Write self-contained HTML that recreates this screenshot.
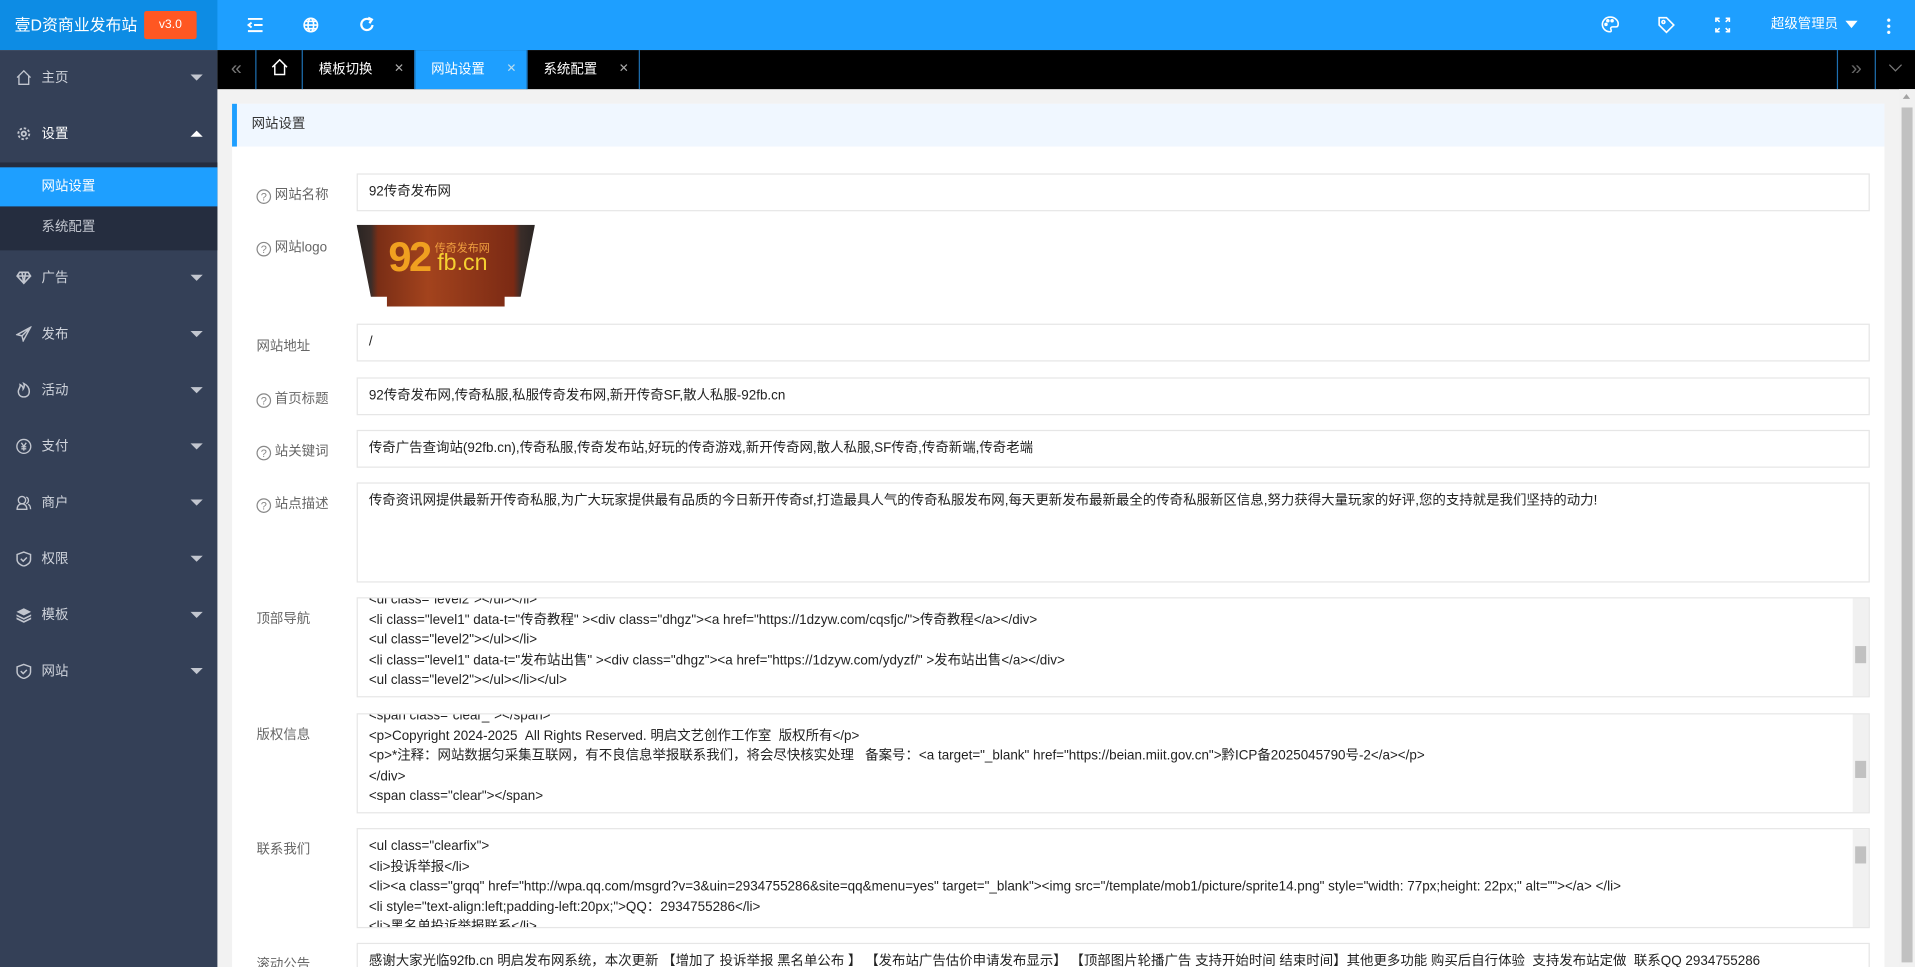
<!DOCTYPE html>
<html><head><meta charset="utf-8"><style>
*{margin:0;padding:0;box-sizing:border-box}
html,body{width:1915px;height:967px;overflow:hidden;background:#f2f2f2}
#w{width:1568px;height:792px;position:relative;transform:scale(1.22130);transform-origin:0 0;font-family:"Liberation Sans","Noto Sans CJK SC",sans-serif;font-size:11px;color:#333;overflow:hidden;background:#f2f2f2}
.abs{position:absolute}
#hd{left:0;top:0;width:1568px;height:41px;background:#1e9fff}
#logo{left:0;top:0;width:178px;height:41px;background:#0d8ce4;color:#fff;font-size:13px;line-height:41px;padding-left:12px}
#ver{left:118px;top:9px;width:43px;height:23px;background:#ff5722;color:#fff;font-size:10px;line-height:23px;text-align:center;border-radius:2px}
#side{left:0;top:41px;width:178px;height:751px;background:#344057}
.mi{position:absolute;left:0;width:178px;height:46px;color:#d0d4dc;font-size:11px;line-height:46px;padding-left:34px}
.mi .ic{position:absolute;left:13px;top:16px;width:13px;height:13px}
.tri{position:absolute;right:12px;top:20px;width:0;height:0;border-left:5px solid transparent;border-right:5px solid transparent;border-top:5px solid #c2c6cf}
.tri.up{border-top:none;border-bottom:5px solid #fff}
#tabs{left:178px;top:41px;width:1390px;height:32px;background:#000}
.tab{position:absolute;top:0;height:32px;line-height:32px;color:#fff;font-size:11px;border-right:1px solid #1e6fb0}
.tab .x{position:absolute;right:8px;top:0;color:#aaa;font-size:10px}
#panel{left:190px;top:85px;width:1353px;height:720px;background:#fff}
#ph{left:0;top:0;width:1353px;height:35px;background:#f0f7ff;border-left:4px solid #1e9fff;line-height:35px;padding-left:12px;color:#333}
.lb{position:absolute;left:20px;color:#666;font-size:11px}
.q{display:inline-block;width:12px;height:12px;border:1px solid #888;border-radius:50%;font-size:9px;line-height:10px;text-align:center;color:#888;margin-right:3px;vertical-align:-1px}
.in{position:absolute;left:102px;width:1239px;border:1px solid #e6e6e6;background:#fff;padding-left:9px;font-size:11px;color:#222;overflow:hidden;white-space:nowrap}
.ta{line-height:16.5px;padding-top:0}
.sb{position:absolute;right:0;top:0;width:13px;height:100%;background:#f1f1f1}
.sb i{position:absolute;left:2px;width:9px;background:#c1c1c1}
#vs{left:1555px;top:73px;width:13px;height:719px;background:#f1f1f1}
</style></head><body><div id="w">
<div id="hd" class="abs"></div>
<div id="logo" class="abs">壹D资商业发布站</div>
<div id="ver" class="abs">v3.0</div>
<svg class="abs" style="left:202px;top:14px" width="14" height="13" viewBox="0 0 14 13" fill="none" stroke="#fff" stroke-width="1.6"><path d="M1 1.5h12M6 6.5h7M1 11.5h12M4 4.5L1.5 6.5 4 8.5"/></svg>
<svg class="abs" style="left:248px;top:14px" width="13" height="13" viewBox="0 0 13 13" fill="none" stroke="#fff" stroke-width="1.3"><circle cx="6.5" cy="6.5" r="5.5"/><ellipse cx="6.5" cy="6.5" rx="2.3" ry="5.5"/><path d="M1 6.5h11M2 3.5h9M2 9.5h9"/></svg>
<svg class="abs" style="left:294px;top:13px" width="13" height="14" viewBox="0 0 13 14" fill="none" stroke="#fff" stroke-width="1.8"><path d="M11 7.5A4.6 4.6 0 1 1 9 3.2"/><path d="M7.5 1.5L10.5 3 8.5 6" /></svg>
<svg class="abs" style="left:1311px;top:13px" width="15" height="14" viewBox="0 0 15 14" fill="none" stroke="#fff" stroke-width="1.3"><path d="M7.5 1C3.5 1 1 4 1 7s2.5 6 6 6c1.5 0 1.5-1 1-2s0-2 1.5-2H12c1.5 0 2-1 2-2.5C14 3.5 11 1 7.5 1z"/><circle cx="4" cy="7" r=".8" fill="#fff"/><circle cx="5.5" cy="4" r=".8" fill="#fff"/><circle cx="9" cy="4" r=".8" fill="#fff"/></svg>
<svg class="abs" style="left:1357px;top:13px" width="15" height="15" viewBox="0 0 15 15" fill="none" stroke="#fff" stroke-width="1.3"><path d="M1.5 1.5h6l6 6-6 6-6-6z"/><circle cx="5" cy="5" r="1.2"/></svg>
<svg class="abs" style="left:1404px;top:14px" width="13" height="13" viewBox="0 0 13 13" fill="none" stroke="#fff" stroke-width="1.3"><path d="M1 4V1h3M1 1l3 3M9 1h3v3M12 1L9 4M1 9v3h3M1 12l3-3M12 9v3H9M12 12L9 9"/></svg>
<div class="abs" style="left:1450px;top:0;line-height:41px;color:#fff;font-size:11px">超级管理员</div>
<div class="abs" style="left:1511px;top:17px;border-left:5px solid transparent;border-right:5px solid transparent;border-top:6px solid #fff"></div>
<div class="abs" style="left:1545px;top:14px;width:3px;height:14px;background:radial-gradient(circle,#fff 1.2px,transparent 1.5px) 0 0/3px 5px"></div>

<div id="side" class="abs">
<div class="mi" style="top:0">主页<svg class="ic" viewBox="0 0 13 13" fill="none" stroke="#c2c6cf" stroke-width="1.1"><path d="M1 6.5L6.5 1 12 6.5M2.5 5v7h8V5"/></svg><span class="tri"></span></div>
<div class="mi" style="top:46px;color:#fff">设置<svg class="ic" viewBox="0 0 13 13" fill="none" stroke="#c2c6cf" stroke-width="1.5"><circle cx="6.5" cy="6.5" r="4.5" stroke-dasharray="2 1.5"/><circle cx="6.5" cy="6.5" r="1.8"/></svg><span class="tri up"></span></div>
<div class="abs" style="left:0;top:92px;width:178px;height:72px;background:#252d3f"></div>
<div class="abs" style="left:0;top:96px;width:178px;height:32px;background:#1e9fff;color:#fff;line-height:32px;padding-left:34px">网站设置</div>
<div class="abs" style="left:0;top:128px;width:178px;height:34px;color:#c2c6cf;line-height:34px;padding-left:34px">系统配置</div>
<div class="mi" style="top:164px">广告<svg class="ic" viewBox="0 0 13 13" fill="none" stroke="#c2c6cf" stroke-width="1.3"><path d="M3 2h7l2 3-5.5 6L1 5zM1 5h11M5 2l1.5 9L8 2"/></svg><span class="tri"></span></div>
<div class="mi" style="top:210px">发布<svg class="ic" viewBox="0 0 13 13" fill="none" stroke="#c2c6cf" stroke-width="1.2"><path d="M12 1L1 7l4 1 1 4 6-11zM5 8l7-7"/></svg><span class="tri"></span></div>
<div class="mi" style="top:256px">活动<svg class="ic" viewBox="0 0 13 13" fill="none" stroke="#c2c6cf" stroke-width="1.2"><path d="M6.5 12C3.5 12 2 10 2 7.5 2 5.5 4 4 3.5 2c2 1 2.5 2.5 2.5 3.5C7 4 7 2 6.5 1c3 1.5 4.5 4 4.5 6.5S9.5 12 6.5 12z"/></svg><span class="tri"></span></div>
<div class="mi" style="top:302px">支付<svg class="ic" viewBox="0 0 13 13" fill="none" stroke="#c2c6cf" stroke-width="1.1"><circle cx="6.5" cy="6.5" r="5.7"/><path d="M4.5 3.5l2 3 2-3M6.5 6.5v3.5M4.5 6.8h4M4.5 8.5h4"/></svg><span class="tri"></span></div>
<div class="mi" style="top:348px">商户<svg class="ic" viewBox="0 0 13 13" fill="none" stroke="#c2c6cf" stroke-width="1.1"><circle cx="5" cy="4.5" r="3"/><path d="M1 12c0-3 2-4.5 4-4.5s4 1.5 4 4.5zM8.5 2a3 3 0 0 1 0 5.5M10 8c1.5.5 2 2 2 4"/></svg><span class="tri"></span></div>
<div class="mi" style="top:394px">权限<svg class="ic" viewBox="0 0 13 13" fill="none" stroke="#c2c6cf" stroke-width="1.2"><path d="M6.5 1L12 3v4c0 3-3 5-5.5 5.5C4 12 1 10 1 7V3z"/><path d="M4 6.5l2 2 3-3"/></svg><span class="tri"></span></div>
<div class="mi" style="top:440px">模板<svg class="ic" viewBox="0 0 13 13" fill="#c2c6cf"><path d="M6.5 1L12.5 4 6.5 7 .5 4z"/><path d="M.5 6l6 3 6-3v1.5l-6 3-6-3zM.5 8.5l6 3 6-3V10l-6 3-6-3z"/></svg><span class="tri"></span></div>
<div class="mi" style="top:486px">网站<svg class="ic" viewBox="0 0 13 13" fill="none" stroke="#c2c6cf" stroke-width="1.2"><path d="M6.5 1L12 3v4c0 3-3 5-5.5 5.5C4 12 1 10 1 7V3z"/><path d="M4 6.5l2 2 3-3"/></svg><span class="tri"></span></div>
</div>

<div id="tabs" class="abs">
<div class="tab" style="left:0;width:32px;text-align:center;color:#777;font-size:16px">«</div>
<div class="tab" style="left:32px;width:38px;text-align:center"><svg width="14" height="14" viewBox="0 0 14 14" fill="none" stroke="#fff" stroke-width="1.2" style="vertical-align:-2px"><path d="M1 7L7 1l6 6M3 5.5V13h8V5.5"/></svg></div>
<div class="tab" style="left:70px;width:92px;padding-left:13px">模板切换<span class="x">✕</span></div>
<div class="tab" style="left:162px;width:92px;padding-left:13px;background:#1e9fff">网站设置<span class="x" style="color:#bde">✕</span></div>
<div class="tab" style="left:254px;width:92px;padding-left:13px">系统配置<span class="x">✕</span></div>
<div class="tab" style="left:1326px;width:32px;text-align:center;color:#666;font-size:16px;border-left:1px solid #1e6fb0">»</div>
<div class="tab" style="left:1358px;width:32px;text-align:center;border:none"><svg width="12" height="8" viewBox="0 0 12 8" fill="none" stroke="#777" stroke-width="1"><path d="M1 1l5 5 5-5"/></svg></div>
</div>

<div id="vs" class="abs"><div class="abs" style="left:3px;top:4px;border-left:3px solid transparent;border-right:3px solid transparent;border-bottom:4px solid #a3a3a3"></div><div class="abs" style="left:2px;top:15px;width:9px;height:700px;background:#c1c1c1"></div></div>

<div id="panel" class="abs">
<div id="ph" class="abs">网站设置</div>
<div class="lb" style="top:66px"><span class="q">?</span>网站名称</div>
<div class="in" style="top:57px;height:31px;line-height:29px">92传奇发布网</div>
<div class="lb" style="top:109px"><span class="q">?</span>网站logo</div>
<div class="abs" style="left:102px;top:99px;width:146px;height:67px;background:linear-gradient(90deg,#2a2523 0,#3a2d29 8%,#7a2e16 12%,#a3431d 40%,#7b2a14 88%,#3a2d29 92%,#2a2523 100%);clip-path:polygon(0 0,100% 0,92% 88%,83% 88%,83% 100%,17% 100%,17% 88%,8% 88%)"><div class="abs" style="left:26px;top:10px;font-size:34px;font-weight:bold;color:#f0a020;letter-spacing:-2px;line-height:34px">92</div><div class="abs" style="left:64px;top:12px;font-size:9px;color:#f0a040">传奇发布网</div><div class="abs" style="left:66px;top:22px;font-size:19px;color:#f5d030;line-height:20px">fb.cn</div></div>
<div class="lb" style="top:190px">网站地址</div>
<div class="in" style="top:180px;height:31px;line-height:29px">/</div>
<div class="lb" style="top:233px"><span class="q">?</span>首页标题</div>
<div class="in" style="top:224px;height:31px;line-height:29px">92传奇发布网,传奇私服,私服传奇发布网,新开传奇SF,散人私服-92fb.cn</div>
<div class="lb" style="top:276px"><span class="q">?</span>站关键词</div>
<div class="in" style="top:267px;height:31px;line-height:29px">传奇广告查询站(92fb.cn),传奇私服,传奇发布站,好玩的传奇游戏,新开传奇网,散人私服,SF传奇,传奇新端,传奇老端</div>
<div class="lb" style="top:319px"><span class="q">?</span>站点描述</div>
<div class="in" style="top:310px;height:82px;line-height:28px">传奇资讯网提供最新开传奇私服,为广大玩家提供最有品质的今日新开传奇sf,打造最具人气的传奇私服发布网,每天更新发布最新最全的传奇私服新区信息,努力获得大量玩家的好评,您的支持就是我们坚持的动力!</div>
<div class="lb" style="top:413px">顶部导航</div>
<div class="in ta" style="top:404px;height:82px"><div style="margin-top:-7px">&lt;ul class="level2"&gt;&lt;/ul&gt;&lt;/li&gt;<br>&lt;li class="level1" data-t="传奇教程" &gt;&lt;div class="dhgz"&gt;&lt;a href="https://1dzyw.com/cqsfjc/"&gt;传奇教程&lt;/a&gt;&lt;/div&gt;<br>&lt;ul class="level2"&gt;&lt;/ul&gt;&lt;/li&gt;<br>&lt;li class="level1" data-t="发布站出售" &gt;&lt;div class="dhgz"&gt;&lt;a href="https://1dzyw.com/ydyzf/" &gt;发布站出售&lt;/a&gt;&lt;/div&gt;<br>&lt;ul class="level2"&gt;&lt;/ul&gt;&lt;/li&gt;&lt;/ul&gt;</div><div class="sb"><i style="top:39px;height:14px"></i></div></div>
<div class="lb" style="top:508px">版权信息</div>
<div class="in ta" style="top:499px;height:82px"><div style="margin-top:-7px">&lt;span class="clear_"&gt;&lt;/span&gt;<br>&lt;p&gt;Copyright 2024-2025 &nbsp;All Rights Reserved. 明启文艺创作工作室 &nbsp;版权所有&lt;/p&gt;<br>&lt;p&gt;*注释：网站数据匀采集互联网，有不良信息举报联系我们，将会尽快核实处理 &nbsp; 备案号：&lt;a target="_blank" href="https://beian.miit.gov.cn"&gt;黔ICP备2025045790号-2&lt;/a&gt;&lt;/p&gt;<br>&lt;/div&gt;<br>&lt;span class="clear"&gt;&lt;/span&gt;</div><div class="sb"><i style="top:38px;height:14px"></i></div></div>
<div class="lb" style="top:602px">联系我们</div>
<div class="in ta" style="top:593px;height:82px;padding-top:6px">&lt;ul class="clearfix"&gt;<br>&lt;li&gt;投诉举报&lt;/li&gt;<br>&lt;li&gt;&lt;a class="grqq" href="http://wpa.qq.com/msgrd?v=3&amp;uin=2934755286&amp;site=qq&amp;menu=yes" target="_blank"&gt;&lt;img src="/template/mob1/picture/sprite14.png" style="width: 77px;height: 22px;" alt=""&gt;&lt;/a&gt; &lt;/li&gt;<br>&lt;li style="text-align:left;padding-left:20px;"&gt;QQ：2934755286&lt;/li&gt;<br>&lt;li&gt;黑名单投诉举报联系&lt;/li&gt;<div class="sb"><i style="top:14px;height:14px"></i></div></div>
<div class="lb" style="top:696px">滚动公告</div>
<div class="in" style="top:687px;height:31px;line-height:29px">感谢大家光临92fb.cn 明启发布网系统，本次更新 【增加了 投诉举报 黑名单公布 】 【发布站广告估价申请发布显示】 【顶部图片轮播广告 支持开始时间 结束时间】其他更多功能 购买后自行体验 &nbsp;支持发布站定做 &nbsp;联系QQ 2934755286</div>
</div>
</div></body></html>
